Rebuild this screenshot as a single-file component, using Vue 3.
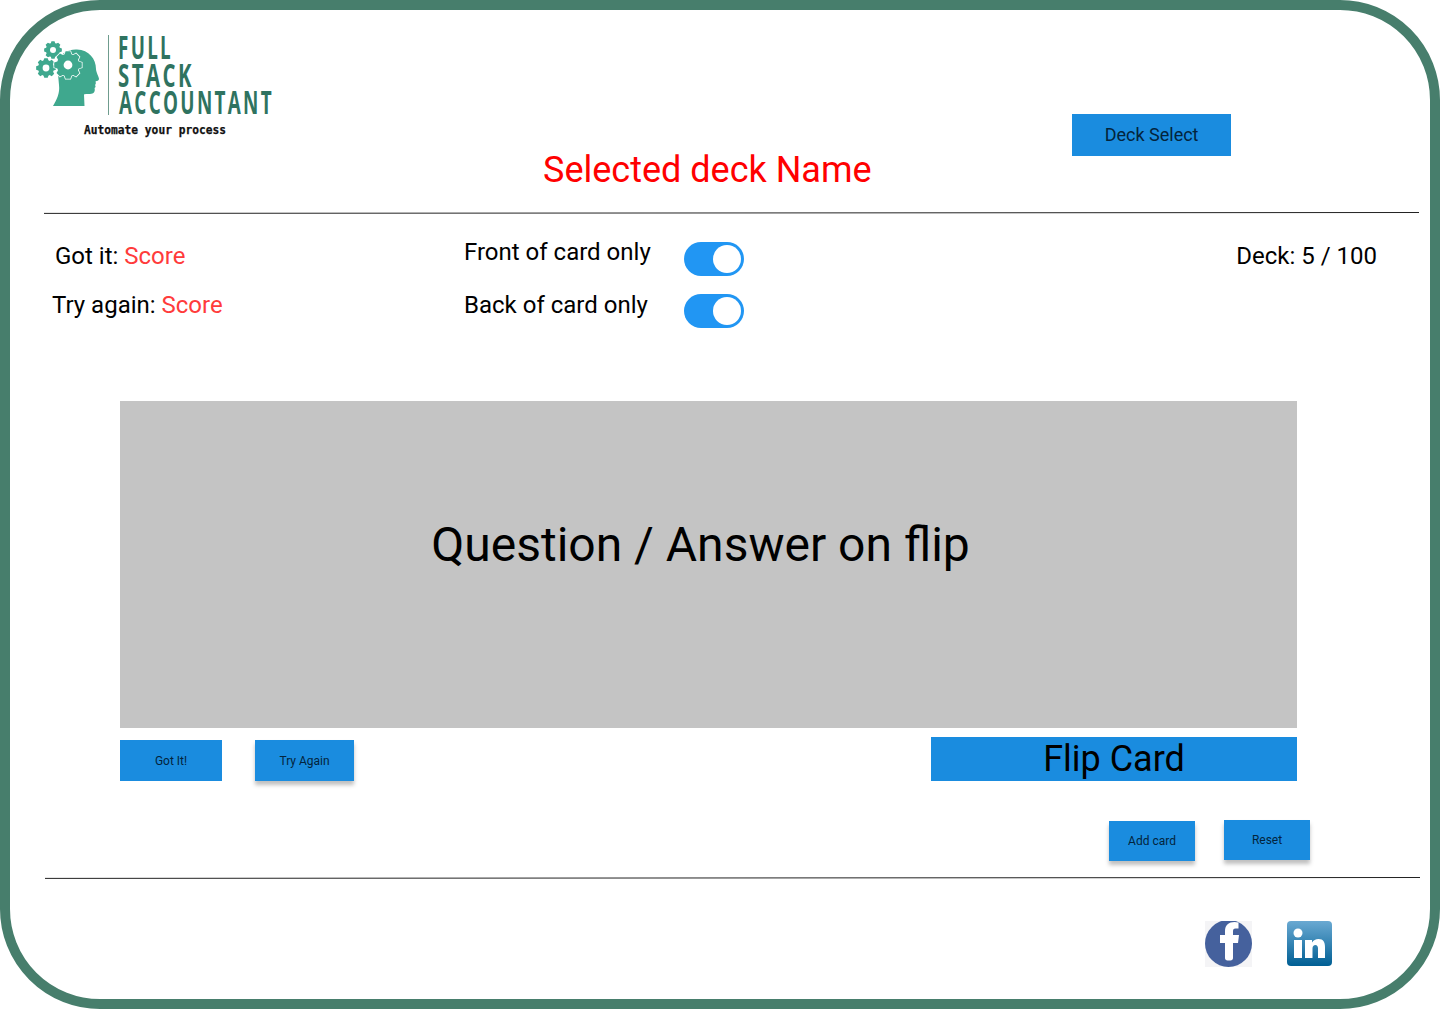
<script setup>
// builds a cog outline around x,y
const gearPath = (x, y, r, count = 8) => {
  const pts = []
  const step = (Math.PI * 2) / count
  for (let i = 0; i < count; i++) {
    const a = i * step
    const w = step * 0.26
    const outer = r
    const inner = r * 0.8
    pts.push([a - w * 1.5, inner], [a - w * 0.85, outer], [a + w * 0.85, outer], [a + w * 1.5, inner])
  }
  const d = pts.map(([a, len], i) => {
    const px = (x + Math.cos(a) * len).toFixed(2)
    const py = (y + Math.sin(a) * len).toFixed(2)
    return `${i ? 'L' : 'M'}${px} ${py}`
  })
  return d.join(' ') + ' Z'
}

const gears = [
  { x: 16, y: 17, r: 9, hole: 3 },
  { x: 9, y: 35, r: 10, hole: 3.4 },
  { x: 31, y: 32, r: 14, hole: 4.4 },
].map((g) => ({ ...g, d: gearPath(g.x, g.y, g.r) }))
</script>

<template>
  <div class="frame">
    <header class="top">
      <div class="logo">
        <svg class="logo-svg" width="238" height="106" viewBox="0 0 238 106">
          <path class="head" d="M16 73 C20 66 23 60 22 52 L20 30 C23 20 32 16 40 16.500 C52 17 59 26 59 36 C59 39 62 44 62 46 C62 47.500 60 48 58.500 48.500 C59 50 59 51 58 52 C59 53.500 58.500 54.500 57.500 55 C58.500 58 57 61 53 61 C51 61 48 60.500 47 61.500 L47.500 73 Z" />
          <g v-for="g in gears" :key="g.x">
            <path class="gear" :d="g.d" />
            <circle class="gear-hole" :cx="g.x" :cy="g.y" :r="g.hole" />
          </g>
          <rect class="rule" x="71" y="2" width="1" height="80" />
          <text class="brand" x="81" y="26" textLength="55" lengthAdjust="spacingAndGlyphs">FULL</text>
          <text class="brand" x="81" y="54" textLength="76" lengthAdjust="spacingAndGlyphs">STACK</text>
          <text class="brand" x="82" y="81" textLength="155" lengthAdjust="spacingAndGlyphs">ACCOUNTANT</text>
          <text class="motto" x="47" y="101" textLength="142" lengthAdjust="spacingAndGlyphs">Automate your process</text>
        </svg>
      </div>
      <h1 class="deck-name">Selected deck Name</h1>
      <button class="btn deck-btn">Deck Select</button>
    </header>

    <svg class="rule-line" width="1375" height="2" viewBox="0 0 1375 2">
      <line x1="0" y1="1.4" x2="1375" y2="0.5" />
    </svg>

    <section class="stats">
      <div class="scores">
        <div class="score score-got">Got it: <span class="red">Score</span></div>
        <div class="score score-try">Try again: <span class="red">Score</span></div>
      </div>
      <div class="toggles">
        <div class="toggle-row">
          <span>Front of card only</span>
          <span class="toggle"><i></i></span>
        </div>
        <div class="toggle-row">
          <span class="back-label">Back of card only</span>
          <span class="toggle"><i></i></span>
        </div>
      </div>
      <div class="deck-count">Deck: 5 / 100</div>
    </section>

    <main class="study">
      <div class="card">Question / Answer on flip</div>
      <div class="card-actions">
        <button class="btn small got">Got It!</button>
        <button class="btn small raised try">Try Again</button>
        <button class="btn flip">Flip Card</button>
      </div>
      <div class="deck-actions">
        <button class="btn small raised add">Add card</button>
        <button class="btn small raised reset">Reset</button>
      </div>
    </main>

    <svg class="rule-line second" width="1375" height="2" viewBox="0 0 1375 2">
      <line x1="0" y1="1.4" x2="1375" y2="0.5" />
    </svg>

    <footer class="social">
      <svg width="47" height="46" viewBox="0 0 47 46">
        <rect width="47" height="46" fill="#f4f4f6" />
        <circle cx="23.5" cy="22.5" r="23.5" fill="#45619d" />
        <path fill="#fff" d="M15 22 L15 14 L20 14 L20 10 C20 4 24 1 29.500 1 C31 1 32.500 1.200 33.500 1.500 L33.500 7.500 L30.500 7.500 C28.500 7.500 28 8.500 28 10.500 L28 14 L34 14 L33 22 L28 22 L28 37 C28 38.500 27 39.500 25.500 39.500 L22.500 39.500 C21 39.500 20 38.500 20 37 L20 22 Z" />
      </svg>
      <svg width="45" height="45" viewBox="0 0 45 45">
        <defs>
          <linearGradient id="inBg" x1="0" y1="0" x2="0" y2="1">
            <stop offset="0" stop-color="#6aa9d2" />
            <stop offset="1" stop-color="#005f94" />
          </linearGradient>
        </defs>
        <rect width="45" height="45" rx="4" fill="url(#inBg)" />
        <circle cx="11" cy="12" r="4.500" fill="#fff" />
        <rect x="7" y="19" width="8" height="18" fill="#fff" />
        <path fill="#fff" d="M18 19 L25 19 L25 21.500 C26.500 19.500 28.500 18 31.500 18 C36.500 18 38 21.500 38 26 L38 37 L31 37 L31 27.500 C31 25.500 30 24 28.500 24 C26.500 24 25.500 25.500 25.500 27.500 L25.500 37 L18 37 Z" />
      </svg>
    </footer>
  </div>
</template>

<style>
body {
  background: #fff;
}
</style>

<style scoped>
.frame {
  box-sizing: border-box;
  width: 1440px;
  height: 1009px;
  border: 10px solid #477e6c;
  border-radius: 100px;
  background: #fff;
  font-family: Roboto, "Liberation Sans", sans-serif;
  color: #000;
  overflow: hidden;
}

.top {
  display: flex;
  align-items: flex-start;
  height: 202px;
}

.logo {
  width: 238px;
  margin: 23px 0 0 27px;
  flex: none;
}

.logo-svg {
  display: block;
  overflow: visible;
}

.head {
  fill: #3fa88e;
}

.gear {
  fill: #3fa88e;
  stroke: #fff;
  stroke-width: 1.5;
  paint-order: stroke;
}

.gear-hole {
  fill: #fff;
}

.rule {
  fill: #6f9c8e;
}

.brand {
  font-family: "Open Sans", sans-serif;
  font-size: 32.5px;
  font-weight: 700;
  letter-spacing: 4px;
  fill: #2f7360;
}

.motto {
  font-family: "DejaVu Sans Mono", monospace;
  font-size: 12px;
  font-weight: 700;
  fill: #111;
  stroke: #111;
  stroke-width: 0.25;
}

.deck-name {
  margin: 139px 0 0 268px;
  font-size: 36px;
  line-height: 42px;
  font-weight: 400;
  color: #f00;
  white-space: nowrap;
}

.btn {
  display: block;
  border: 0;
  padding: 0;
  background: #1a8cdf;
  color: #000;
  font-family: inherit;
}

.deck-btn {
  width: 159px;
  height: 42px;
  margin: 104px 0 0 200px;
  padding: 0 0 2px 1px;
  font-size: 18px;
  color: #03243c;
}

.rule-line {
  display: block;
  margin-left: 34px;
}

.rule-line line {
  stroke: #222;
  stroke-width: 1;
}

.stats {
  display: grid;
  grid-template-columns: 454px 1fr auto;
  height: 140px;
  font-size: 24px;
  line-height: 28px;
}

.score-got {
  margin: 28px 0 0 45px;
}

.score-try {
  margin: 21px 0 0 42px;
}

.red {
  color: #ff3b3b;
}

.toggles {
  padding-top: 24px;
}

.toggle-row {
  display: flex;
  width: 280px;
  height: 52px;
  justify-content: space-between;
}

.back-label {
  margin-top: 1px;
}

.toggle {
  display: flex;
  justify-content: flex-end;
  align-items: center;
  box-sizing: border-box;
  width: 60px;
  height: 34px;
  margin-top: 4px;
  padding-right: 3px;
  border-radius: 17px;
  background: #2196f3;
}

.toggle i {
  width: 28px;
  height: 28px;
  border-radius: 50%;
  background: #fff;
}

.deck-count {
  margin: 28px 53px 0 0;
}

.study {
  padding: 47px 0 0 110px;
  height: 523px;
  box-sizing: border-box;
}

.card {
  display: flex;
  justify-content: center;
  width: 1177px;
  height: 327px;
  box-sizing: border-box;
  padding: 116px 16px 0 0;
  background: #c4c4c4;
  font-size: 48px;
  line-height: 56px;
}

.card-actions {
  display: flex;
  align-items: flex-start;
  width: 1177px;
  height: 92px;
  padding-top: 9px;
  box-sizing: border-box;
}

.small {
  font-size: 12px;
  color: #03243c;
}

.raised {
  box-shadow: 0 4px 4px rgba(0, 0, 0, 0.25);
}

.got {
  width: 102px;
  height: 41px;
  margin-top: 3px;
}

.try {
  width: 99px;
  height: 41px;
  margin: 3px 0 0 33px;
}

.flip {
  width: 366px;
  height: 44px;
  margin-left: auto;
  font-size: 36px;
  line-height: 44px;
}

.deck-actions {
  display: flex;
  align-items: flex-start;
  padding-left: 989px;
  height: 42px;
}

.add {
  width: 86px;
  height: 40px;
  margin-top: 1px;
}

.reset {
  width: 86px;
  height: 40px;
  margin-left: 29px;
}

.second {
  margin-left: 35px;
}

.social {
  display: flex;
  align-items: flex-start;
  gap: 35px;
  padding: 42px 0 0 1195px;
}
</style>
